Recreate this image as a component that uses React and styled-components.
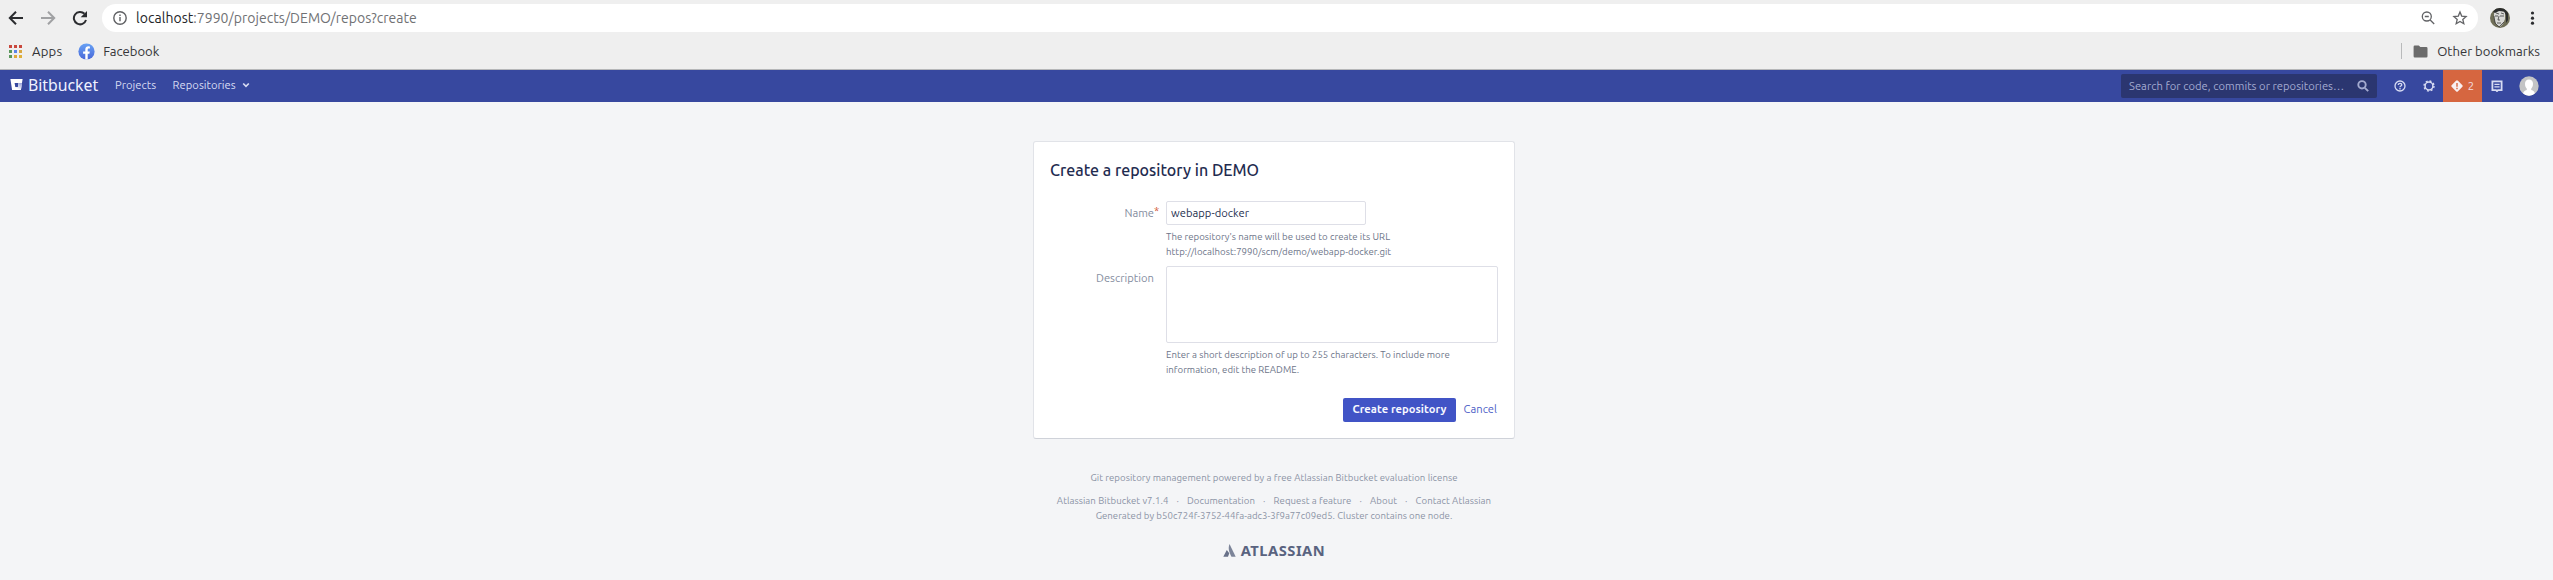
import React from 'react';
import styled, { createGlobalStyle } from 'styled-components';

const Global = createGlobalStyle`
  *, *::before, *::after { box-sizing: border-box; }
  body { margin: 0; background: #f4f5f7; font-family: "Ubuntu", "Noto Sans", sans-serif; overflow: hidden; }
  svg { display: block; flex: none; }
`;

const Text = styled.span`
  font-size: ${p => p.$size}px;
  letter-spacing: ${p => p.$track || 0}px;
  white-space: nowrap;
`;
const LogoText = styled(Text)`font-family: "Noto Sans", sans-serif;`;

/* Browser chrome */
const Toolbar = styled.div`
  display: flex; align-items: center; height: 36px; background: #efefef;
  padding: 0 17px 0 8px;
`;
const NavButtons = styled.div`
  display: flex; align-items: center; gap: 16px; width: 94px;
`;
const Omnibox = styled.div`
  flex: 1; height: 28px; border-radius: 14px; background: #fff;
  display: flex; align-items: center; padding: 0 10px 0 11px; gap: 9px;
`;
const Url = styled(Text)`
  flex: 1; color: #707174; line-height: 20px; margin-top: -1px;
  b { font-weight: 400; color: #242528; }
`;
const BoxActions = styled.div`display: flex; gap: 16px;`;
const Profile = styled.div`display: flex; align-items: center; gap: 19px; margin-left: 12px;`;

const Bookmarks = styled.div`
  display: flex; align-items: center; height: 34px; background: #efefef;
  border-bottom: 1px solid #b6b7b9; padding: 0 13px 3px 9px; color: #343538;
`;
const Bookmark = styled.div`
  display: flex; align-items: center; gap: ${p => p.$gap}px; margin-right: ${p => p.$after || 0}px;
`;
const AppGrid = styled.div`
  display: grid; grid-template-columns: repeat(3, 3px); grid-auto-rows: 3px; gap: 2px;
`;
const AppDot = styled.i`background: ${p => p.$color};`;
const Divider = styled.i`width: 1px; height: 16px; background: #b9babb; margin: 0 11px 0 auto;`;

/* Application header */
const Header = styled.header`
  display: flex; align-items: center; height: 32px; background: #37489f; color: #d8dcf3;
  padding: 0 7px 0 10px;
`;
const Brand = styled.div`
  display: flex; align-items: center; gap: 5px; width: 105px; color: #f0f2ff; padding-bottom: 3px;
  line-height: 24px;
`;
const NavItem = styled.div`
  display: flex; align-items: center; gap: 6px; margin-right: 16.5px; padding-bottom: 2px;
`;
const Search = styled.div`
  display: flex; align-items: center; justify-content: space-between; width: 256px; height: 24px;
  margin-left: auto; padding: 0 8px; background: #2b3670; border-radius: 2px; color: #a4abd0;
`;
const Tools = styled.div`display: flex; align-items: center; height: 100%;`;
const Tool = styled.div`
  display: flex; align-items: center; justify-content: center; height: 100%; width: ${p => p.$w}px;
`;
const Alert = styled(Tool)`background: #d66640; gap: 5px; margin-left: 7px; color: #f3dfe0;`;

/* Page body */
const Page = styled.main`
  display: flex; flex-direction: column; align-items: center; padding: 39px 5px 0 0;
`;
const Card = styled.section`
  width: 482px; height: 298px; background: #fff; border: 1px solid #e1e3e8;
  border-bottom-color: #cfd2d9; border-radius: 3px; padding: 18px 16px 0 16px;
`;
const Title = styled.h1`
  margin: 0 0 21px; font-size: 16px; font-weight: 500; line-height: 20px; color: #1f2c50;
`;
const Field = styled.div`
  display: grid; grid-template-columns: 104px 332px; column-gap: 12px; margin-bottom: ${p => p.$after}px;
`;
const Label = styled.label`
  display: flex; justify-content: flex-end; height: 24px; line-height: 24px; color: #858da0;
`;
const Required = styled.i`
  width: 0; font-style: normal; font-size: 11px; line-height: 20px; color: #d0522f;
`;
const NameInput = styled.input`
  display: block; width: 200px; height: 24px; border: 1px solid #dedfe7; border-radius: 2px; background: #fff;
  padding: 0 4px; font-family: inherit; font-size: 11.2px; letter-spacing: .03px; color: #25304f; outline: none;
`;
const DescriptionInput = styled.textarea`
  display: block; width: 332px; height: 77px; border: 1px solid #dedfe7; border-radius: 2px; background: #fff;
  resize: none; outline: none;
`;
const Help = styled.div`
  display: flex; flex-direction: column; margin-top: 4px; line-height: 15px; color: #6d7589;
`;
const Actions = styled.div`
  display: flex; justify-content: flex-end; align-items: center; gap: 7.500px; padding-right: 1px;
`;
const Submit = styled.button`
  width: 113px; height: 24px; border: 0; border-radius: 2px; background: #4154c6; color: #f7f8ff;
  padding: 0 0 2px; font: 700 11.2px "Ubuntu", "Noto Sans", sans-serif; letter-spacing: .06px; white-space: nowrap;
`;
const Cancel = styled(Text)`color: #4e5fc7; line-height: 22px; padding-bottom: 2px;`;

const Footer = styled.footer`
  display: flex; flex-direction: column; align-items: center; margin-top: 31px; line-height: 15px; color: #8b93a5;
`;
const Links = styled.div`display: flex; margin-top: 8px;`;
const Dot = styled.span`width: 18.6px; text-align: center; font-size: 9.6px;`;
const Atlassian = styled.div`
  display: flex; align-items: center; gap: 5px; margin-top: 20px; color: #596380; font-weight: 700;
`;

const Stroke = ({ w, h = w, sw = 2, color = 'currentColor', children }) => (
  <svg width={w} height={h} viewBox={`0 0 ${w} ${h}`} fill="none" stroke={color} strokeWidth={sw}>{children}</svg>
);

const Face = () => (
  <svg width="20" height="20" viewBox="0 0 20 20">
    <clipPath id="face"><circle cx="10" cy="10" r="10" /></clipPath>
    <g clipPath="url(#face)">
      <path fill="#6f6e57" d="M0 0h20v20H0z" />
      <path fill="#d8d8d5" d="M4 4l5-2 6 2v7l-2 5-3 3-4-3-2-6z" />
      <path fill="#2b2c2c" d="M3 4l3-4h8l4 5v7l-2 3V7l-2-3.500-5-.6-4 2z" />
      <path fill="none" stroke="#3d3d3c" strokeWidth=".8" d="M5 8h3m2 0h4M9 8l-1 4h2m-3 3h4M4 8l1 7 4 4 5-5M6 5l3 1m2-1l3 1" />
    </g>
  </svg>
);

const dots = ['#c9483d', '#c9483d', '#c9483d', '#5b975b', '#5c84e8', '#d9a741', '#5b975b', '#dfa83b', '#dfb03b'];
const links = ['Atlassian Bitbucket v7.1.4', 'Documentation', 'Request a feature', 'About', 'Contact Atlassian'];

export default function App() {
  return (
    <>
      <Global />
      <Toolbar>
        <NavButtons>
          <Stroke w={16} color="#2b2c2f"><path d="M15 8H2.5M8 1.7L1.8 8L8 14.3" /></Stroke>
          <Stroke w={16} color="#a0a1a3"><path d="M1 8h12.5M8 1.7L14.2 8L8 14.3" /></Stroke>
          <svg width="16" height="16" viewBox="0 0 16 16">
            <path fill="none" stroke="#2b2c2f" strokeWidth="2" d="M14 10A6.2 6.2 0 1 1 12.5 3.8" />
            <path fill="#2b2c2f" d="M15 1v6.3H8.7z" />
          </svg>
        </NavButtons>
        <Omnibox>
          <Stroke w={14} sw={1.4} color="#606164"><circle cx="7" cy="7" r="6.2" /><path d="M7 6v4.3M7 3.5v1.5" /></Stroke>
          <Url $size={14} $track={0.04}><b>localhost</b>:7990/projects/DEMO/repos?create</Url>
          <BoxActions>
            <Stroke w={16} sw={1.3} color="#626366"><circle cx="6.8" cy="6.5" r="4.5" /><path d="M10.2 10L14.2 14M4.8 6.5h4" /></Stroke>
            <Stroke w={16} sw={1.3} color="#626366"><path d="M8 2l1.7 4.1 4.4.4-3.3 2.9 1 4.3L8 11.4l-3.8 2.3 1-4.3-3.3-2.9 4.4-.4z" /></Stroke>
          </BoxActions>
        </Omnibox>
        <Profile>
          <Face />
          <svg width="7" height="14" viewBox="0 0 7 14" fill="#2b2c2f">
            <circle cx="3.5" cy="2" r="1.6" /><circle cx="3.5" cy="7.2" r="1.6" /><circle cx="3.5" cy="12.2" r="1.6" />
          </svg>
        </Profile>
      </Toolbar>
      <Bookmarks>
        <Bookmark $gap={10} $after={16}>
          <AppGrid>{dots.map((c, i) => <AppDot key={i} $color={c} />)}</AppGrid>
          <Text $size={13.1} $track={0.2}>Apps</Text>
        </Bookmark>
        <Bookmark $gap={8}>
          <svg width="17" height="17" viewBox="0 0 17 17">
            <defs><linearGradient id="fb" x1="0" y1="0" x2="0" y2="1"><stop stopColor="#68a2f5" /><stop offset="1" stopColor="#4867d8" /></linearGradient></defs>
            <circle cx="8.5" cy="8.5" r="8.1" fill="url(#fb)" />
            <path fill="#fff" d="M7.3 16.5v-5.7H5.1V8.4h2.2V6.6c0-2.2 1.3-3.3 3.2-3.3l1.4.1v2.1h-1.1c-.8 0-1.1.5-1.1 1.1v1.8h2.1l-.4 2.4H9.7v5.7z" />
          </svg>
          <Text $size={13.1}>Facebook</Text>
        </Bookmark>
        <Divider />
        <Bookmark $gap={9}>
          <svg width="15" height="13" viewBox="0 0 15 13" fill="#6b6b6b"><path d="M1.8.5h4l1.5 1.6h6q1.2 0 1.2 1.2v7.9q0 1.2-1.2 1.2H1.8Q.6 12.4.6 11.2V1.7Q.6.5 1.8.5z" /></svg>
          <Text $size={13.1}>Other bookmarks</Text>
        </Bookmark>
      </Bookmarks>
      <Header>
        <Brand>
          <svg width="13" height="13" viewBox="0 0 13 13">
            <defs><linearGradient id="bb" x1="1" y1="0" x2=".3" y2="1"><stop stopColor="#8d98d4" /><stop offset=".8" stopColor="#fff" /></linearGradient></defs>
            <path fill="#fff" fillRule="evenodd" d="M.4 1h12.2l-1.7 11H2.1zM4.6 5l.7 3.900h2.600L8.500 5z" />
            <path fill="url(#bb)" d="M8.500 5h3.500l-1.100 7H2.100l3.200-3.100h2.600z" />
          </svg>
          <LogoText $size={15.8}>Bitbucket</LogoText>
        </Brand>
        <NavItem><Text $size={11.2} $track={0.03}>Projects</Text></NavItem>
        <NavItem>
          <Text $size={11.2} $track={0.03}>Repositories</Text>
          <Stroke w={8} h={6} sw={1.7}><path d="M1.2 1.5L4 4.3L6.8 1.5" /></Stroke>
        </NavItem>
        <Search>
          <Text $size={11.2} $track={0.04}>Search for code, commits or repositories…</Text>
          <Stroke w={12} sw={1.9}><circle cx="5" cy="4.8" r="3.7" /><path d="M7.8 7.8L11.2 11.2" /></Stroke>
        </Search>
        <Tools>
          <Tool $w={45}>
            <Stroke w={12} sw={1.3}><circle cx="6" cy="6" r="5" /><path d="M4.3 4.9c0-2.2 3.500-2.100 3.500-.1 0 1.200-1.800 1.200-1.800 2.400M6 8.100v1.300" /></Stroke>
          </Tool>
          <Tool $w={14}>
            <Stroke w={12}>
              <circle cx="6" cy="6" r="3.9" strokeWidth="1.5" />
              <circle cx="6" cy="6" r="5" strokeWidth="1.4" strokeDasharray="1.96 1.96" />
            </Stroke>
          </Tool>
          <Alert $w={39}>
            <svg width="12" height="12" viewBox="0 0 12 12"><path fill="#f8eff2" d="M6 .3Q6.5.3 7 .8L11.2 5q1 1 0 2L7 11.2q-1 1-2 0L.8 7q-1-1 0-2L5 .8Q5.5.3 6 .3z" /><path stroke="#d66640" strokeWidth="1.4" d="M6 3v3.8M6 7.7v1.5" /></svg>
            <Text $size={11.2}>2</Text>
          </Alert>
          <Tool $w={29}>
            <Stroke w={12} sw={1.8}><path d="M1.4 1.4h9.200v8.700H7l-1 1-1-1H1.400z" /><path strokeWidth="1.3" d="M3.4 4.3h5.200M3.400 6.900h5.200" /></Stroke>
          </Tool>
          <Tool $w={35}>
            <svg width="20" height="20" viewBox="0 0 20 20">
              <clipPath id="user"><circle cx="10" cy="10" r="9.7" /></clipPath>
              <g clipPath="url(#user)"><path fill="#c3c4c5" d="M0 0h20v20H0z" /><path fill="#fff" d="M10 3.5c2.7 0 4 1.800 4 4.300s-.8 4-1.800 4.900v1.400c2 .7 4 1.300 4 5.900H3.800c0-4.600 2-5.200 4-5.900v-1.400C6.800 11.800 6 10.300 6 7.800s1.300-4.300 4-4.300z" /></g>
            </svg>
          </Tool>
        </Tools>
      </Header>
      <Page>
        <Card>
          <Title>Create a repository in DEMO</Title>
          <Field $after={7}>
            <Label><Text $size={11.2}>Name</Text><Required>*</Required></Label>
            <div>
              <NameInput defaultValue="webapp-docker" />
              <Help>
                <Text $size={9.6} $track={0.05}>The repository's name will be used to create its URL</Text>
                <Text $size={9.6} $track={0.04}>http://localhost:7990/scm/demo/webapp-docker.git</Text>
              </Help>
            </div>
          </Field>
          <Field $after={21}>
            <Label><Text $size={11.2} $track={0.03}>Description</Text></Label>
            <div>
              <DescriptionInput />
              <Help>
                <Text $size={9.6} $track={0.04}>Enter a short description of up to 255 characters. To include more</Text>
                <Text $size={9.6} $track={0.03}>information, edit the README.</Text>
              </Help>
            </div>
          </Field>
          <Actions>
            <Submit>Create repository</Submit>
            <Cancel $size={11.2} $track={0.03}>Cancel</Cancel>
          </Actions>
        </Card>
        <Footer>
          <Text $size={9.6} $track={0.06}>Git repository management powered by a free Atlassian Bitbucket evaluation license</Text>
          <Links>
            {links.map((label, i) => (
              <React.Fragment key={label}>
                {i > 0 && <Dot>·</Dot>}
                <Text $size={9.6} $track={0.055}>{label}</Text>
              </React.Fragment>
            ))}
          </Links>
          <Text $size={9.6} $track={0.035}>Generated by b50c724f-3752-44fa-adc3-3f9a77c09ed5. Cluster contains one node.</Text>
          <Atlassian>
            <svg width="13" height="13" viewBox="0 0 13 13" fill="#7c8499"><path d="M6.5 0L12.7 12.7H8.500C6.200 8.500 4.800 4.500 6.500 0z" /><path fill="#687189" d="M3.8 6L6.3 9.300 5 12.700H.3z" /></svg>
            <LogoText $size={14.7} $track={0.5}>ATLASSIAN</LogoText>
          </Atlassian>
        </Footer>
      </Page>
    </>
  );
}
